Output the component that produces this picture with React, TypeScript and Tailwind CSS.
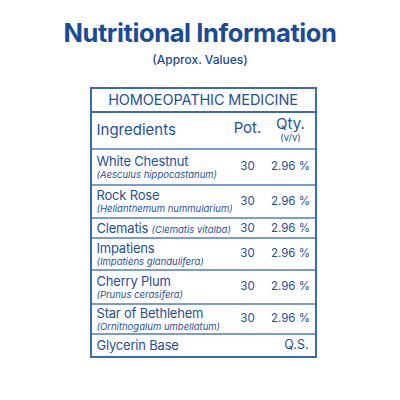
import React from 'react';

const rows = [
  { name: 'White Chestnut', latin: '(Aesculus hippocastanum)', h: 'h-[36px]' },
  { name: 'Rock Rose', latin: '(Helianthemum nummularium)', h: 'h-[33px]' },
  { name: 'Clematis', latin: '(Clematis vitalba)', inline: true, h: 'h-[20px]' },
  { name: 'Impatiens', latin: '(Impatiens glandulifera)', h: 'h-[32px]' },
  { name: 'Cherry Plum', latin: '(Prunus cerasifera)', h: 'h-[34px]' },
  { name: 'Star of Bethlehem', latin: '(Ornithogalum umbellatum)', h: 'h-[30px]' },
];

const App = () => {
  return (
    <div className="w-[400px] h-[400px] bg-white flex flex-col items-center text-[#1f4f9d] font-['Inter','Liberation_Sans',sans-serif]">
      <h1 className="mt-[17px] text-[25.5px] leading-[32px] font-bold tracking-[-0.4px] text-[#1a4a98]">
        Nutritional Information
      </h1>
      <p className="mt-[3px] text-[12px] leading-[16px] font-medium text-[#1a4a98]">(Approx. Values)</p>

      <div className="mt-[19px] w-[227px] ml-[6px] border-2 border-[#3a6ab4]">
        <div className="h-[24px] flex items-center justify-center text-[14.5px] tracking-[-0.1px] border-b-2 border-[#3a6ab4]">
          HOMOEOPATHIC MEDICINE
        </div>

        <div className="h-[37px] grid grid-cols-[minmax(0,1fr)_36px_42px] gap-x-[4px] pl-[5px] pr-[3px] items-center border-b-2 border-[#7a9ccf]">
          <span className="text-[15px]">Ingredients</span>
          <span className="text-[15px] text-center -mt-[4px]">Pot.</span>
          <div className="flex flex-col items-center gap-[1px] -mt-[2px]">
            <span className="text-[15px] leading-[16px]">Qty.</span>
            <span className="text-[9.5px] leading-[10px]">(v/v)</span>
          </div>
        </div>

        {rows.map((r) => (
          <div
            key={r.name}
            className={`${r.h} grid grid-cols-[minmax(0,1fr)_36px_42px] gap-x-[4px] pl-[5px] pr-[3px] items-center border-b-2 border-[#7a9ccf]`}
          >
            {r.inline ? (
              <div className="whitespace-nowrap leading-[16px]">
                <span className="text-[13px] tracking-[-0.2px]">{r.name} </span>
                <span className="text-[9.5px] italic">{r.latin}</span>
              </div>
            ) : (
              <div className="flex flex-col">
                <span className="text-[13px] leading-[15px] tracking-[-0.2px]">{r.name}</span>
                <span className="text-[9.5px] leading-[12px] italic whitespace-nowrap">{r.latin}</span>
              </div>
            )}
            <span className="text-[11.5px] text-center">30</span>
            <span className="text-[11.5px] text-center whitespace-nowrap">2.96 %</span>
          </div>
        ))}

        <div className="h-[21px] flex items-center justify-between pl-[5px] pr-[6px]">
          <span className="text-[13px] tracking-[-0.2px]">Glycerin Base</span>
          <span className="text-[12.5px]">Q.S.</span>
        </div>
      </div>
    </div>
  );
};

export default App;
